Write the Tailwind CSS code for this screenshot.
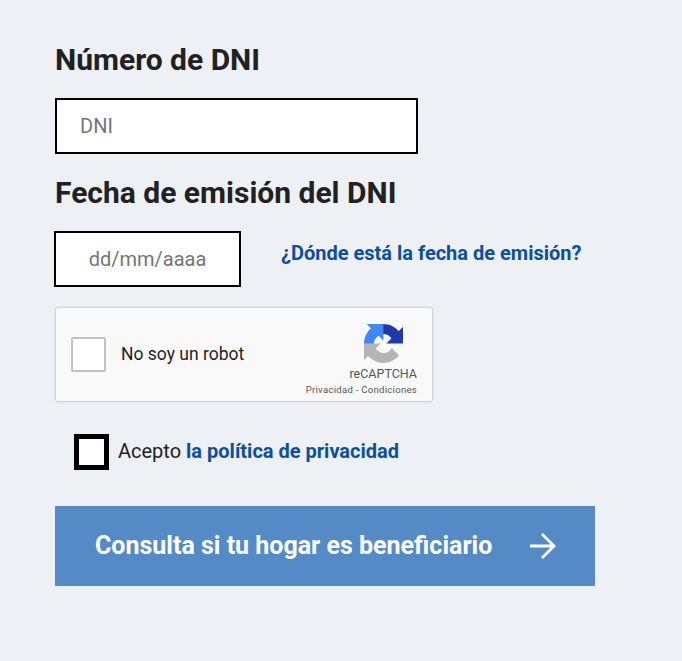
<!DOCTYPE html>
<html lang="es">
<head>
  <meta charset="UTF-8" />
  <meta name="viewport" content="width=device-width, initial-scale=1.0" />
  <title>Consulta</title>
  <script src="https://cdn.jsdelivr.net/npm/@tailwindcss/browser@4"></script>
</head>
<body class="min-h-screen bg-[#edf0f4] font-['Roboto',sans-serif] text-[#212121]">

  <form class="pl-[55px] pt-[41px] pb-[75px]">
    <!-- DNI -->
    <h2 class="text-[30px] leading-[38px] font-bold">Número de DNI</h2>
    <input type="text" placeholder="DNI"
           class="block mt-[19px] w-[363px] h-[56px] pl-[23px] bg-white border-2 border-black text-[20px] placeholder:text-[#757575] outline-none" />

    <!-- fecha -->
    <h2 class="mt-[20px] text-[30px] leading-[38px] font-bold">Fecha de emisión del DNI</h2>
    <div class="mt-[19px] -ml-px flex items-center">
      <input type="text" placeholder="dd/mm/aaaa"
             class="block w-[187px] h-[56px] bg-white border-2 border-black text-[20px] text-center placeholder:text-[#757575] outline-none" />
      <a href="#" class="ml-[40px] -mt-[12px] text-[20px] font-bold text-[#0b4f9e]">¿Dónde está la fecha de emisión?</a>
    </div>

    <!-- captcha -->
    <div class="mt-[20px] w-[378px] h-[95px] flex justify-between items-center bg-[#f9f9f9] border border-[#d3d3d3] rounded-[3px] shadow-[0_0_3px_rgba(0,0,0,0.08)]">
      <div class="flex items-center pl-[15px]">
        <span class="w-[35px] h-[35px] bg-white border-2 border-[#c1c1c1] rounded-[2px]"></span>
        <span class="ml-[15px] text-[17.5px] text-[#1f1f1f]">No soy un robot</span>
      </div>
      <div class="flex flex-col items-end pr-[15px] pt-[10px]">
        <svg class="w-[39px] h-[39px] mr-[14px]" viewBox="0 0 64 64">
          <path d="M64 31.955l-.033-1.37V4.687l-7.16 7.16C50.948 4.674 42.033.093 32.05.093c-10.4 0-19.622 4.96-25.458 12.64l11.736 11.86a15.55 15.55 0 0 1 4.754-5.334c2.05-1.6 4.952-2.906 8.968-2.906.485 0 .86.057 1.135.163 4.976.393 9.288 3.14 11.828 7.124l-8.307 8.307 32.3-.001" fill="#1c3aa9"/>
          <path d="M31.862.002l-1.37.033H4.594l7.16 7.16C4.58 13.055 0 21.97 0 31.954c0 10.4 4.96 19.622 12.64 25.458l11.86-11.736a15.55 15.55 0 0 1-5.334-4.754c-1.6-2.05-2.906-4.952-2.906-8.968 0-.485.057-.86.163-1.135.393-4.976 3.14-9.288 7.124-11.828l8.307 8.307-.001-32.3" fill="#4285f4"/>
          <path d="M.002 31.958l.033 1.37v25.898l7.16-7.16c5.86 7.173 14.775 11.754 24.76 11.754 10.4 0 19.622-4.96 25.458-12.64l-11.736-11.86a15.55 15.55 0 0 1-4.754 5.334c-2.05 1.6-4.952 2.906-8.968 2.906-.485 0-.86-.057-1.135-.163-4.976-.393-9.288-3.14-11.828-7.124l8.307-8.307-32.3.001" fill="#b5b5b5"/>
        </svg>
        <span class="mt-[4px] text-[12.5px] leading-[14px] text-[#555]">reCAPTCHA</span>
        <span class="mt-[3px] text-[9.5px] leading-[12px] tracking-[0.3px] text-[#555]">Privacidad - Condiciones</span>
      </div>
    </div>

    <!-- privacidad -->
    <div class="mt-[32px] ml-[19px] flex items-center">
      <span class="w-[35px] h-[36px] bg-white border-[5px] border-black"></span>
      <span class="ml-[9px] -mt-[2px] text-[20px] leading-[28px] text-[#212121]">Acepto <a href="#" class="font-bold text-[#0b4f9e]">la política de privacidad</a></span>
    </div>

    <button type="button" class="mt-[36px] w-[540px] h-[80px] pl-[40px] flex items-center bg-[#548bc6] text-white text-[25px] font-bold">
      Consulta si tu hogar es beneficiario
      <svg class="ml-[36px] w-[28px] h-[28px]" viewBox="0 0 28 28" fill="none" stroke="currentColor" stroke-width="2.8">
        <path d="M2 14h24M14 2l12 12-12 12" />
      </svg>
    </button>
  </form>

</body>
</html>
